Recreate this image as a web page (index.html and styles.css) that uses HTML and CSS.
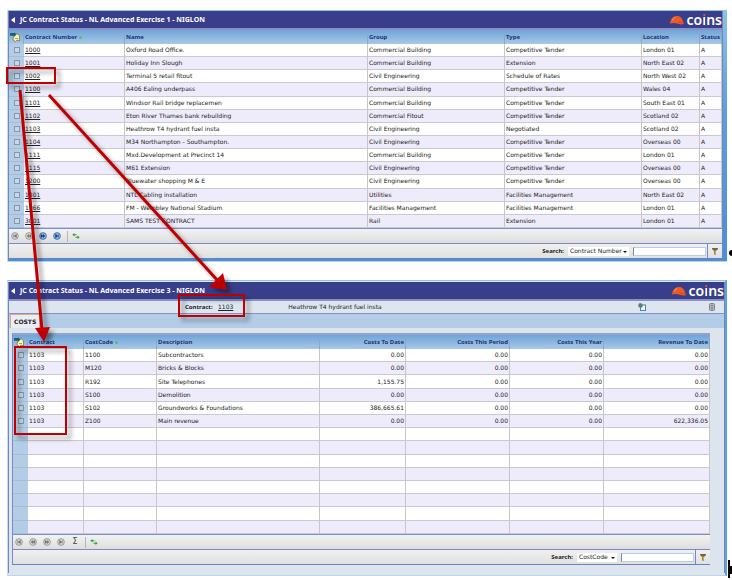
FILE: index.html
```
<!DOCTYPE html>
<html lang="en">
<head>
<meta charset="utf-8">
<title>JC Contract Status</title>
<link rel="stylesheet" href="styles.css">
</head>
<body>
<svg class="defs" width="0" height="0" aria-hidden="true">
  <defs>
    <symbol id="helmet" viewBox="0 0 14 10">
      <path d="M0 8.500C.3 4 3 1 7 1c3.500 0 5.500 2.500 6 5.500l1 2.500c-2 .8-4 .5-6-.3C5 7.600 2.500 7.700 0 8.500z" fill="#ee5a24"/>
      <path d="M2.500 5.500C3.200 3.500 4.300 2.500 5.500 2" fill="none" stroke="#ffa573" stroke-width=".8"/>
      <path d="M8 7c2 .8 3.800 1 5.500.8" fill="none" stroke="#b83a14" stroke-width=".6"/>
    </symbol>
    <symbol id="export" viewBox="0 0 10 10">
      <path d="M4 2h4l1.500 2v5L7 8 5.500 9.500 3 8z" fill="#fbf3b0" stroke="#776a30" stroke-width=".7"/>
      <path d="M0 1h4v-.8L6.500 2.500 4 5V3.700H0z" fill="#17616e"/>
      <path d="M5 6.500h3" stroke="#8d8343" stroke-width=".7"/>
    </symbol>
    <symbol id="first" viewBox="0 0 8 8">
      <circle cx="4" cy="4" r="3.400" class="disc"/><path d="M2.500 2.300v3.400M5.500 2.300v3.400L3 4z" class="mark"/>
    </symbol>
    <symbol id="prev" viewBox="0 0 8 8">
      <circle cx="4" cy="4" r="3.400" class="disc"/><path d="M4 2.500v3L2 4zM6 2.500v3L4 4z" class="mark"/>
    </symbol>
    <symbol id="next" viewBox="0 0 8 8">
      <circle cx="4" cy="4" r="3.400" class="disc"/><path d="M2 2.500v3L4 4zM4 2.500v3L6 4z" class="mark"/>
    </symbol>
    <symbol id="last" viewBox="0 0 8 8">
      <circle cx="4" cy="4" r="3.400" class="disc"/><path d="M2.500 2.300v3.400L5 4zM5.500 2.300v3.400" class="mark"/>
    </symbol>
    <symbol id="refresh" viewBox="0 0 8 8">
      <path d="M2.500 1v1.200h2v1h-2v1.300L.3 2.800zM5.500 3.500L7.700 5.200 5.500 7V5.800h-2v-1h2z" fill="#2fa32c"/>
    </symbol>
    <symbol id="funnel" viewBox="0 0 8 8">
      <path d="M1 1h6v1L5 4v3.500H3V4L1 2z" fill="#6d6658"/><path d="M3.500 3.500h1.500V7H3.500z" fill="#e0a52a"/>
    </symbol>
  </defs>
</svg>

<main class="page">
  <section class="window">
    <header class="titlebar">
      <button class="back" aria-label="Back"></button>
      <h1>JC Contract Status - NL Advanced Exercise 1 - NIGLON</h1>
      <span class="brand"><svg width="14" height="10"><use href="#helmet"/></svg>co<i>i</i>ns</span>
    </header>
    <table class="grid contracts">
      <colgroup><col class="pick"><col class="number"><col class="name"><col class="group"><col class="type"><col class="location"><col class="status"></colgroup>
      <thead><tr><th><svg width="10" height="10"><use href="#export"/></svg></th><th>Contract Number <b class="sort"></b></th><th>Name</th><th>Group</th><th>Type</th><th>Location</th><th>Status</th></tr></thead>
      <tbody id="contracts"></tbody>
    </table>
    <div class="toolbar">
      <button class="off" aria-label="First"><svg width="8" height="8"><use href="#first"/></svg></button>
      <button class="off" aria-label="Previous"><svg width="8" height="8"><use href="#prev"/></svg></button>
      <button class="on" aria-label="Next"><svg width="8" height="8"><use href="#next"/></svg></button>
      <button class="on" aria-label="Last"><svg width="8" height="8"><use href="#last"/></svg></button>
      <span class="divider"></span>
      <button aria-label="Refresh"><svg width="8" height="8"><use href="#refresh"/></svg></button>
    </div>
    <form class="search">
      <label for="field1">Search:</label>
      <span class="picker wide"><select id="field1"><option>Contract Number</option></select></span>
      <input type="text" aria-label="Search text">
      <button class="filter" type="button" aria-label="Filter"><svg width="8" height="8"><use href="#funnel"/></svg></button>
    </form>
  </section>

  <section class="window detail">
    <header class="titlebar">
      <button class="back" aria-label="Back"></button>
      <h1>JC Contract Status - NL Advanced Exercise 3 - NIGLON</h1>
      <span class="brand"><svg width="14" height="10"><use href="#helmet"/></svg>co<i>i</i>ns</span>
    </header>
    <div class="info">
      <span class="key">Contract:</span><a href="#c1103">1103</a><span class="value">Heathrow T4 hydrant fuel insta</span>
      <button class="copy" aria-label="Open report"><svg width="8" height="8" viewBox="0 0 8 8"><rect x="2.500" y="2" width="5" height="5.500" fill="#e9f3fd" stroke="#5a7eb5"/><circle cx="2.500" cy="2.500" r="2.300" fill="#6d7a70"/><path d="M2 0v3h2" stroke="#2f9a4a" fill="none"/></svg></button>
      <button aria-label="Attachments"><svg width="8" height="8" viewBox="0 0 8 8"><rect x="1.500" y=".5" width="5" height="7" rx="1" fill="#b5b8bc" stroke="#7e8388"/><path d="M3 2.500h2M3 4h2M3 5.500h2" stroke="#6b7075" stroke-width=".7"/></svg></button>
    </div>
    <nav class="tabs"><button class="tab">COSTS</button></nav>
    <div class="frame">
      <table class="grid costs">
        <colgroup><col class="pick"><col class="contract"><col class="code"><col class="desc"><col class="todate"><col class="period"><col class="year"><col class="revenue"></colgroup>
        <thead><tr><th><svg width="10" height="10"><use href="#export"/></svg></th><th>Contract</th><th>CostCode <b class="sort"></b></th><th>Description</th><th>Costs To Date</th><th>Costs This Period</th><th>Costs This Year</th><th>Revenue To Date</th></tr></thead>
        <tbody id="costs"></tbody>
      </table>
      <div class="toolbar">
        <button class="off" aria-label="First"><svg width="8" height="8"><use href="#first"/></svg></button>
        <button class="off" aria-label="Previous"><svg width="8" height="8"><use href="#prev"/></svg></button>
        <button class="off" aria-label="Next"><svg width="8" height="8"><use href="#next"/></svg></button>
        <button class="off" aria-label="Last"><svg width="8" height="8"><use href="#last"/></svg></button>
        <button class="sum" aria-label="Totals">Σ</button>
        <span class="divider"></span>
        <button aria-label="Refresh"><svg width="8" height="8"><use href="#refresh"/></svg></button>
      </div>
      <form class="search">
        <label for="field2">Search:</label>
        <span class="picker"><select id="field2"><option>CostCode</option></select></span>
        <input type="text" aria-label="Search text">
        <button class="filter" type="button" aria-label="Filter"><svg width="8" height="8"><use href="#funnel"/></svg></button>
      </form>
    </div>
  </section>

  <svg class="callouts" width="732" height="580" viewBox="0 0 732 580" aria-hidden="true">
    <g class="ink">
      <rect x="7" y="68" width="48" height="15"/>
      <rect x="179" y="295" width="65" height="21"/>
      <rect x="15" y="347" width="51" height="87"/>
      <path class="arrow" d="M20 90L42 330M49 95L218 281"/>
      <path class="head" d="M35 328L50 327 44 342zM209 287L223 273 227 290z"/>
    </g>
    <circle cx="732" cy="253" r="3"/>
    <path d="M728 560h2v18h-2zM730 566h2v8h-2z"/>
  </svg>
</main>
<script src="script.js"></script>
</body>
</html>
```

FILE: styles.css
```
* { box-sizing: border-box; }
body {
  margin: 0;
  background: #fff;
  color: #222;
  font: 6px/8px "DejaVu Sans", sans-serif;
}
.defs { position: absolute; }
.page { position: relative; padding: 10px 5px 4px 7px; }
svg { display: block; }
button { border: 0; padding: 0; background: none; font: inherit; color: #444; display: block; }
a { color: #222; }

.window {
  padding: 1px 4px 2px 0;
  background: linear-gradient(#8ec2e6, #5a9fe0 40%, #4a8fd8);
  border-bottom: 1px solid #b8d6ee;
  border-left: 1px solid #c5dcf0;
}
.window > * { border-left: 1px solid #6f86c0; border-right: 1px solid #6f86c0; }
.detail {
  margin-top: 18px;
  padding: 1px 0 2px;
  background: #dce4ee;
  border-top: 1px solid #8ec2e6;
  border-right: 2px solid #5a9fe0;
}

.titlebar {
  display: flex;
  align-items: center;
  height: 19px;
  padding: 0 0 0 2px;
  background: #393e8b;
  border-bottom: 2px solid #8b90c4;
  color: #fff;
}
.back { width: 0; height: 0; border: 3px solid transparent; border-right: 4px solid #fff; border-left: 0; }
h1 { margin: 0 auto 0 5px; font: bold 7px/10px "Noto Sans", sans-serif; }
.brand { display: flex; align-items: center; font: 600 14px/14px "Noto Sans", sans-serif; }
.brand svg { margin-right: 3px; }
.brand i { font-style: normal; background: linear-gradient(#ee5a24 30%, #fff 30%); background-clip: text; color: transparent; }

.grid { width: 100%; table-layout: fixed; border-collapse: separate; border-spacing: 0; background: #fff; height: 199px; }
.contracts { border-bottom: 1px solid #7c8fc8; }
.grid th, .grid td { padding: 0 1px; text-align: left; white-space: nowrap; overflow: hidden; border-right: 1px solid #c6c6cc; border-bottom: 1px solid #c9c9cf; height: 13px; }
.grid thead th { height: 14px; font-family: "Noto Sans", sans-serif; color: #23307c; background: linear-gradient(#6fa5d8, #a8c8e6); border-right-color: #8aa8c8; border-bottom: 0; }
.grid tbody tr:nth-child(even) td { background: #eeebfb; }
.grid tbody td:first-child, .grid tbody tr:nth-child(even) td:first-child { background: #b3cde7; border-bottom-color: #a7bdd3; border-right: 0; }
.grid input { appearance: none; display: block; width: 6px; height: 6px; margin: 0 auto; border: 1px solid #8797a8; background: #c6d8ea; }
.grid .amount, .costs th:nth-child(n+5) { text-align: right; }
.sort { display: inline-block; width: 3px; height: 3px; background: #4fc35a; border-radius: 2px; }
.pick { width: 15px; }
.number { width: 101px; }
.name { width: 243px; }
.group { width: 137px; }
.type { width: 137px; }
.location { width: 58px; }
.contract { width: 56px; }
.code { width: 73px; }
.desc { width: 163px; }
.todate { width: 86px; }
.period { width: 104px; }
.year { width: 94px; }

.toolbar { display: flex; align-items: center; gap: 6px; height: 15px; padding: 0 2px; background: linear-gradient(#f2f2f2, #dedede); border-bottom: 1px solid #8088c0; }
.toolbar button { width: 8px; }
.toolbar .sum { font-size: 8px; }
.divider { width: 1px; height: 11px; margin-right: -2px; background: #b5b5b5; }
.off { --disc: #d5d5d5; --mark: #777; }
.on { --disc: #8fc0f0; --mark: #123a80; }
.disc { fill: var(--disc); stroke: var(--mark); stroke-width: .6; }
.mark { fill: var(--mark); stroke: var(--mark); stroke-width: .5; }

.search { display: flex; align-items: center; justify-content: flex-end; gap: 4px; height: 15px; background: linear-gradient(#f0f0f0, #e0e0e0); border-bottom: 1px solid #6f7fc0; }
.search label { font-family: "Noto Sans", sans-serif; font-weight: bold; color: #222; }
.picker { width: 40px; height: 9px; background: #fff; position: relative; }
.picker.wide { width: 61px; }
.picker::after { content: ""; position: absolute; right: 2px; top: 4px; border: 2px solid transparent; border-top-color: #111; border-bottom: 0; }
select { appearance: none; display: block; width: 100%; height: 9px; border: 0; padding: 0 2px; background: none; font: inherit; color: #222; }
.search input { width: 73px; height: 9px; padding: 0 1px; border: 1px solid #b4cfe6; border-left-color: #6c8cb4; background: #fff; font: inherit; }
.filter { align-self: stretch; width: 15px; padding: 0 3px; border-left: 1px solid #7c84c0; margin-left: -3px; }

.info { display: flex; align-items: center; height: 13px; padding: 0 8px 0 176px; border-bottom: 1px solid #8b90c4; background: #dde5ee; }
.key { font-family: "Noto Sans", sans-serif; font-weight: bold; width: 33px; }
.value { margin-left: 55px; }
.copy { margin-left: auto; margin-right: 62px; }
.tabs { height: 14px; background: #b3cde7; }
.tab { height: 14px; margin-left: 1px; padding: 0 3px; background: #e9eef4; border: 1px solid #e8a58c; border-bottom: 0; font-weight: bold; color: #222; }
.window > .frame { padding: 5px 14px 8px 3px; }
.frame > * { border-left: 1px solid #8088c0; }
.costs { height: 202px; border-top: 2px solid #93a3cc; border-bottom: 1px solid #7c8fc8; }

.callouts { position: absolute; left: 0; top: 0; pointer-events: none; }
.ink { fill: none; stroke: #c00000; stroke-width: 2; filter: drop-shadow(4px 4px 2px rgba(0, 0, 0, .4)); }
.ink .arrow { stroke-width: 3; }
.ink .head { fill: #c00000; stroke: none; }
```

FILE: script.js
```
const contracts = [
  ["1000", "Oxford Road Office.", "Commercial Building", "Competitive Tender", "London 01"],
  ["1001", "Holiday Inn Slough", "Commercial Building", "Extension", "North East 02"],
  ["1002", "Terminal 5 retail fitout", "Civil Engineering", "Schedule of Rates", "North West 02"],
  ["1100", "A406 Ealing underpass", "Commercial Building", "Competitive Tender", "Wales 04"],
  ["1101", "Windsor Rail bridge replacemen", "Commercial Building", "Competitive Tender", "South East 01"],
  ["1102", "Eton River Thames bank rebuilding", "Commercial Fitout", "Competitive Tender", "Scotland 02"],
  ["1103", "Heathrow T4 hydrant fuel insta", "Civil Engineering", "Negotiated", "Scotland 02"],
  ["1104", "M34 Northampton - Southampton.", "Civil Engineering", "Competitive Tender", "Overseas 00"],
  ["1111", "Mxd.Development at Precinct 14", "Commercial Building", "Competitive Tender", "London 01"],
  ["1115", "M61 Extension", "Civil Engineering", "Competitive Tender", "Overseas 00"],
  ["1200", "Bluewater shopping M & E", "Civil Engineering", "Competitive Tender", "Overseas 00"],
  ["1301", "NTL Cabling installation", "Utilities", "Facilities Management", "North East 02"],
  ["1966", "FM - Wembley National Stadium", "Facilities Management", "Facilities Management", "London 01"],
  ["3001", "SAMS TEST CONTRACT", "Rail", "Extension", "London 01"]
];
const costs = [
  ["1100", "Subcontractors", "0.00", "0.00"],
  ["M120", "Bricks & Blocks", "0.00", "0.00"],
  ["R192", "Site Telephones", "1,155.75", "0.00"],
  ["S100", "Demolition", "0.00", "0.00"],
  ["S102", "Groundworks & Foundations", "386,665.61", "0.00"],
  ["Z100", "Main revenue", "0.00", "622,336.05"]
];

function addRow(body, cells, label) {
  const row = body.insertRow();
  const pick = row.insertCell();
  if (label) {
    const box = document.createElement("input");
    box.type = "checkbox";
    box.setAttribute("aria-label", label);
    pick.append(box);
  }
  for (const text of cells) row.insertCell().textContent = text;
  return row;
}

const contractBody = document.getElementById("contracts");
for (const c of contracts) {
  const row = addRow(contractBody, [...c, "A"], "Select " + c[0]);
  const link = document.createElement("a");
  link.href = "#c" + c[0];
  link.textContent = c[0];
  row.cells[1].replaceChildren(link);
}

const costBody = document.getElementById("costs");
for (let i = 0; i < 14; i++) {
  const c = costs[i];
  const cells = c ? ["1103", c[0], c[1], c[2], "0.00", "0.00", c[3]] : Array(7).fill("");
  const row = addRow(costBody, cells, c && "Select " + c[0]);
  for (let k = 4; k < 8; k++) row.cells[k].className = "amount";
}
```
